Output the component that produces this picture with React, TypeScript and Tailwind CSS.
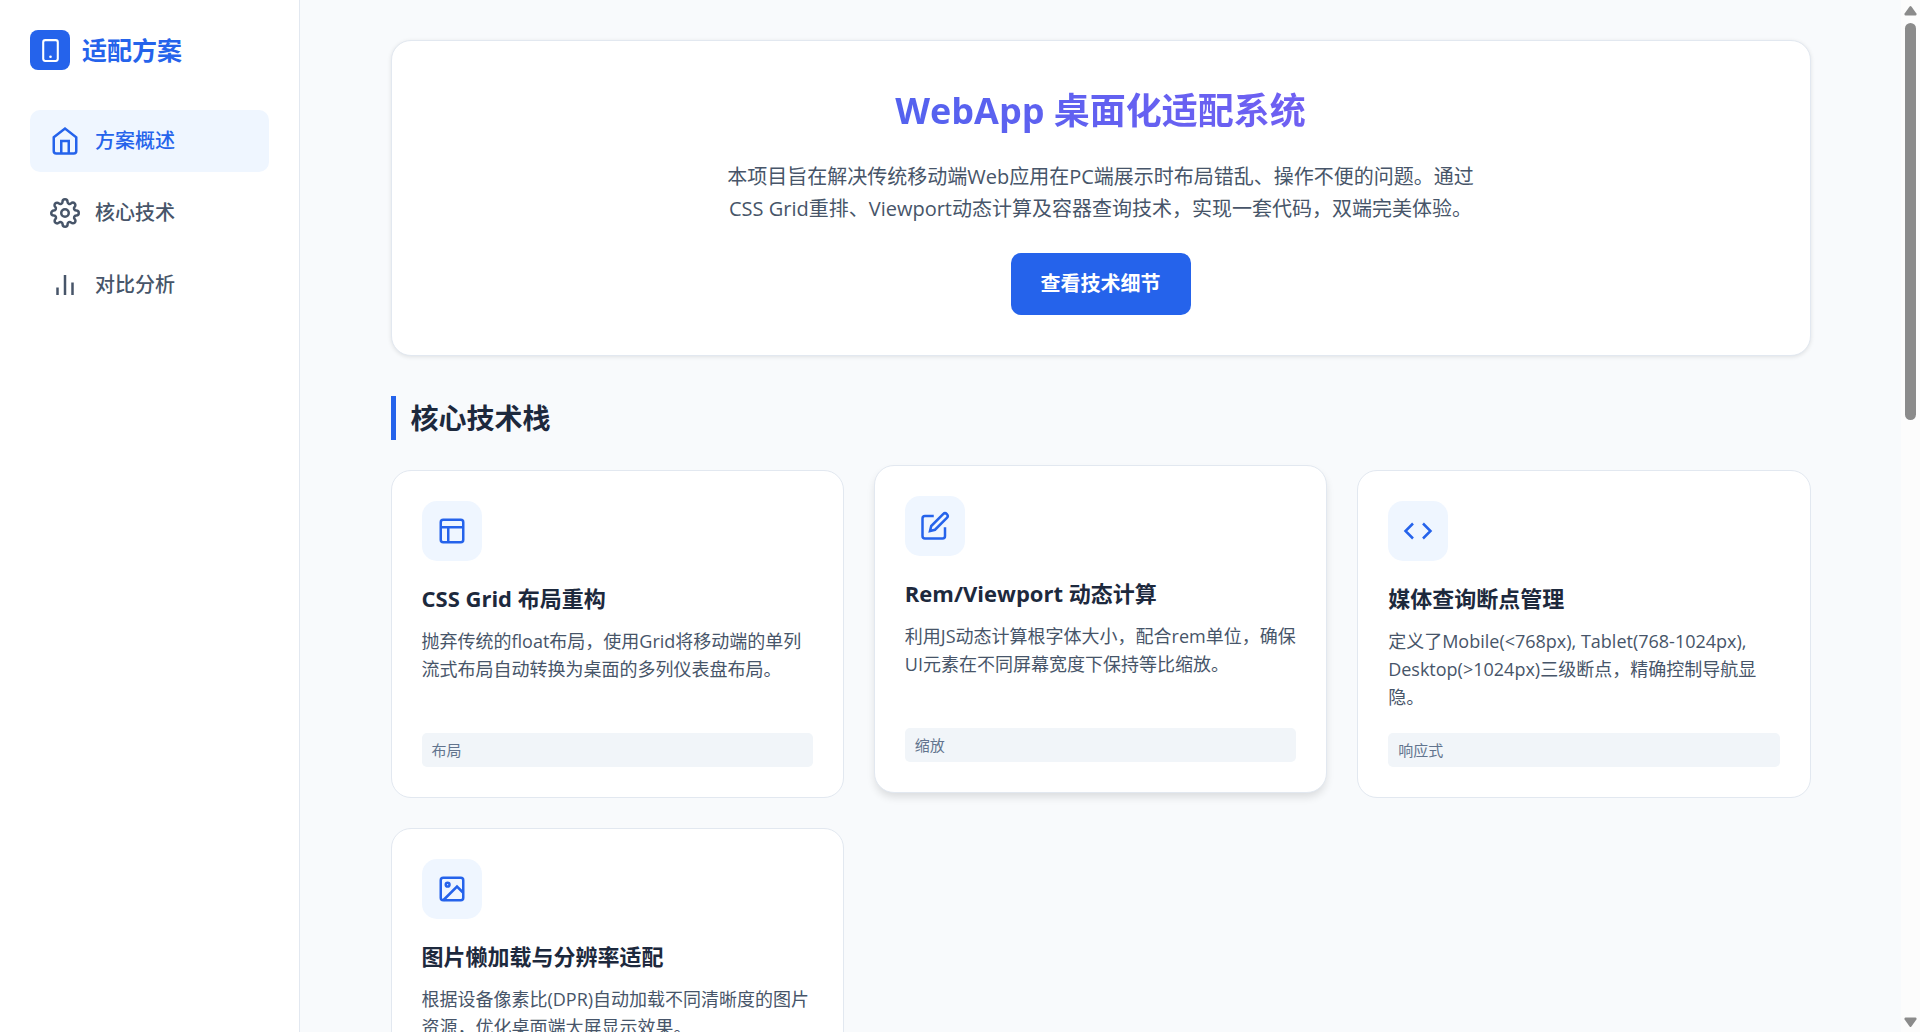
import type { ReactNode } from 'react';
import clsx from 'clsx';

interface IconProps {
  className?: string;
  children: ReactNode;
}

function Icon({ className = 'size-[30px]', children }: IconProps) {
  return (
    <svg className={className} viewBox="0 0 24 24" fill="none" stroke="currentColor" strokeWidth={2} aria-hidden="true">
      {children}
    </svg>
  );
}

const navItems = [
  {
    id: 'overview',
    label: '方案概述',
    icon: (
      <Icon>
        <path d="M3 9l9-7 9 7v11a2 2 0 0 1-2 2H5a2 2 0 0 1-2-2z" />
        <polyline points="9 22 9 12 15 12 15 22" />
      </Icon>
    ),
  },
  {
    id: 'tech',
    label: '核心技术',
    icon: (
      <Icon>
        <circle cx="12" cy="12" r="3" />
        <path d="M19.4 15a1.65 1.65 0 0 0 .33 1.82l.06.06a2 2 0 0 1 0 2.83 2 2 0 0 1-2.83 0l-.06-.06a1.65 1.65 0 0 0-1.82-.33 1.65 1.65 0 0 0-1 1.51V21a2 2 0 0 1-2 2 2 2 0 0 1-2-2v-.09A1.65 1.65 0 0 0 9 19.4a1.65 1.65 0 0 0-1.82.33l-.06.06a2 2 0 0 1-2.83 0 2 2 0 0 1 0-2.83l.06-.06a1.65 1.65 0 0 0 .33-1.82 1.65 1.65 0 0 0-1.51-1H3a2 2 0 0 1-2-2 2 2 0 0 1 2-2h.09A1.65 1.65 0 0 0 4.6 9a1.65 1.65 0 0 0-.33-1.82l-.06-.06a2 2 0 0 1 0-2.83 2 2 0 0 1 2.83 0l.06.06a1.65 1.65 0 0 0 1.82.33H9a1.65 1.65 0 0 0 1-1.51V3a2 2 0 0 1 2-2 2 2 0 0 1 2 2v.09a1.65 1.65 0 0 0 1 1.51 1.65 1.65 0 0 0 1.82-.33l.06-.06a2 2 0 0 1 2.83 0 2 2 0 0 1 0 2.83l-.06.06a1.65 1.65 0 0 0-.33 1.82V9a1.65 1.65 0 0 0 1.51 1H21a2 2 0 0 1 2 2 2 2 0 0 1-2 2h-.09a1.65 1.65 0 0 0-1.51 1z" />
      </Icon>
    ),
  },
  {
    id: 'compare',
    label: '对比分析',
    icon: (
      <Icon>
        <line x1="18" y1="20" x2="18" y2="10" />
        <line x1="12" y1="20" x2="12" y2="4" />
        <line x1="6" y1="20" x2="6" y2="14" />
      </Icon>
    ),
  },
];

interface Tech {
  title: string;
  description: string;
  tag?: string;
  raised?: boolean;
  icon: ReactNode;
}

const techs: Tech[] = [
  {
    title: 'CSS Grid 布局重构',
    description: '抛弃传统的float布局，使用Grid将移动端的单列流式布局自动转换为桌面的多列仪表盘布局。',
    tag: '布局',
    icon: (
      <Icon>
        <rect x="3" y="3" width="18" height="18" rx="2" />
        <line x1="3" y1="9" x2="21" y2="9" />
        <line x1="9" y1="21" x2="9" y2="9" />
      </Icon>
    ),
  },
  {
    title: 'Rem/Viewport 动态计算',
    description: '利用JS动态计算根字体大小，配合rem单位，确保UI元素在不同屏幕宽度下保持等比缩放。',
    tag: '缩放',
    raised: true,
    icon: (
      <Icon>
        <path d="M11 4H4a2 2 0 0 0-2 2v14a2 2 0 0 0 2 2h14a2 2 0 0 0 2-2v-7" />
        <path d="M18.5 2.5a2.121 2.121 0 0 1 3 3L12 15l-4 1 1-4 9.5-9.5z" />
      </Icon>
    ),
  },
  {
    title: '媒体查询断点管理',
    description: '定义了Mobile(<768px), Tablet(768-1024px), Desktop(>1024px)三级断点，精确控制导航显隐。',
    tag: '响应式',
    icon: (
      <Icon>
        <polyline points="16 18 22 12 16 6" />
        <polyline points="8 6 2 12 8 18" />
      </Icon>
    ),
  },
  {
    title: '图片懒加载与分辨率适配',
    description: '根据设备像素比(DPR)自动加载不同清晰度的图片资源，优化桌面端大屏显示效果。',
    icon: (
      <Icon>
        <rect x="3" y="3" width="18" height="18" rx="2" />
        <circle cx="8.5" cy="8.5" r="1.5" />
        <polyline points="21 15 16 10 5 21" />
      </Icon>
    ),
  },
];

function Sidebar() {
  return (
    <aside className="w-[300px] shrink-0 border-r border-slate-200 bg-white p-[30px]">
      <div className="mb-10 flex items-center gap-3 text-[#2563eb]">
        <span className="flex size-10 items-center justify-center rounded-lg bg-[#2563eb] text-white">
          <Icon className="size-[25px]">
            <rect x="5" y="2" width="14" height="20" rx="2" />
            <line x1="12" y1="18" x2="12.01" y2="18" strokeWidth="2.5" strokeLinecap="round" />
          </Icon>
        </span>
        <span className="text-[25px] leading-10 font-bold">适配方案</span>
      </div>
      <nav className="flex flex-col gap-[10px]">
        {navItems.map((item, index) => (
          <a
            key={item.id}
            href={`#${item.id}`}
            className={clsx(
              'flex items-center gap-[15px] rounded-[10px] px-5 py-[15px] text-xl leading-8 font-medium',
              index === 0 ? 'bg-[#eff6ff] text-[#2563eb]' : 'text-[#475569]'
            )}
          >
            {item.icon}
            {item.label}
          </a>
        ))}
      </nav>
    </aside>
  );
}

function TechCard({ title, description, tag, raised, icon }: Tech) {
  return (
    <article
      className={clsx(
        'flex flex-col rounded-[20px] border border-slate-200 bg-white p-[30px]',
        raised && '-translate-y-[5px] shadow-[0_5px_8px_-1px_rgba(0,0,0,0.12)]'
      )}
    >
      <div className="mb-5 flex size-[60px] items-center justify-center rounded-[15px] bg-[#eff6ff] text-[#2563eb]">
        {icon}
      </div>
      <h3 className="mb-3 text-[22px] leading-[34px] font-bold">{title}</h3>
      <p className="mb-[22px] grow text-lg leading-7 text-[#475569]">{description}</p>
      {tag && (
        <span className="rounded-[5px] bg-slate-100 px-[10px] py-[5px] text-[15px] leading-6 text-slate-500">{tag}</span>
      )}
    </article>
  );
}

function Scrollbar() {
  return (
    <div className="flex w-[19px] shrink-0 flex-col items-center bg-[#fcfcfc] text-[#8b8b8b]" aria-hidden="true">
      <svg className="h-[23px] w-[19px]" viewBox="0 0 19 23" fill="currentColor">
        <path d="M8.6 6.6q.9-1.1 1.8 0l5 7q.8 1.9-.9 1.9h-10q-1.7-.1-.9-1.9z" />
      </svg>
      <div className="h-[397px] w-[11px] rounded-full bg-[#8b8b8b]" />
      <svg className="mt-auto h-[23px] w-[19px]" viewBox="0 0 19 23" fill="currentColor">
        <path d="M8.6 17.4q.9 1.1 1.8 0l5-7q.8-1.9-.9-1.9h-10q-1.7.1-.9 1.9z" />
      </svg>
    </div>
  );
}

export default function App() {
  return (
    <div
      lang="zh-CN"
      className="flex h-screen bg-[#f8fafc] font-['Open_Sans','Noto_Sans_CJK_SC',sans-serif] text-slate-800"
    >
      <Sidebar />
      <main className="min-w-0 flex-1 overflow-y-auto [scrollbar-width:none]">
        <div className="mx-auto max-w-[1500px] p-10">
          <section
            id="overview"
            className="mb-10 flex flex-col items-center rounded-[20px] border border-slate-200 bg-white p-10 text-center shadow-[0_1px_4px_rgba(0,0,0,0.1)]"
          >
            <h1 className="mb-5 w-full bg-linear-to-r from-[#2563eb] to-[#8b5cf6] bg-clip-text text-4xl leading-[60px] font-bold text-transparent">
              WebApp 桌面化适配系统
            </h1>
            <p className="mb-7 max-w-[760px] text-xl leading-8 text-[#475569]">
              本项目旨在解决传统移动端Web应用在PC端展示时布局错乱、操作不便的问题。通过CSS Grid重排、Viewport动态计算及容器查询技术，实现一套代码，双端完美体验。
            </p>
            <button type="button" className="rounded-[10px] bg-[#2563eb] px-[30px] py-[15px] text-xl leading-8 font-semibold text-white">
              查看技术细节
            </button>
          </section>

          <section id="tech">
            <h2 className="mb-[30px] border-l-5 border-[#2563eb] pl-[15px] text-[28px] leading-[44px] font-bold">核心技术栈</h2>
            <div className="grid grid-cols-1 gap-[30px] md:grid-cols-2 xl:grid-cols-3">
              {techs.map((tech) => (
                <TechCard key={tech.title} {...tech} />
              ))}
            </div>
          </section>
        </div>
      </main>
      <Scrollbar />
    </div>
  );
}
